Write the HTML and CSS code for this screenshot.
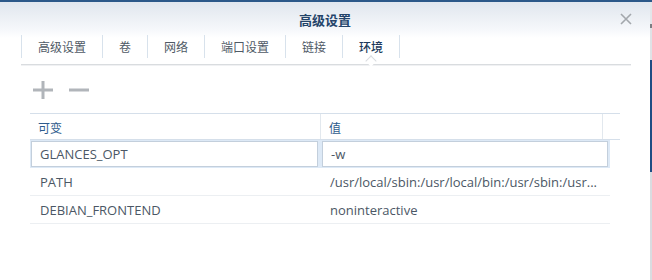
FILE: index.html
```html
<!DOCTYPE html>
<html lang="zh-CN">
<head>
  <meta charset="UTF-8">
  <title>高级设置</title>
  <link rel="stylesheet" href="styles.css">
</head>
<body>
  <div class="top-line"></div>
  <div class="page">
    <div class="dialog">
      <!-- Title -->
      <div class="title-bar">
        <span class="title">高级设置</span>
        <svg class="close" width="12" height="12" viewBox="0 0 12 12">
          <path d="M1 1L11 11M11 1L1 11" stroke="#a3a7ac" stroke-width="1.6" fill="none"/>
        </svg>
      </div>

      <!-- Tabs -->
      <div class="tabs">
        <div class="tab">高级设置</div>
        <div class="tab">卷</div>
        <div class="tab">网络</div>
        <div class="tab">端口设置</div>
        <div class="tab">链接</div>
        <div class="tab active">环境</div>
      </div>

      <!-- Toolbar -->
      <div class="toolbar">
        <svg width="20" height="20" viewBox="0 0 20 20">
          <path d="M0 10H20M10 1V19" stroke="#b1b5ba" stroke-width="3" fill="none"/>
        </svg>
        <svg width="20" height="20" viewBox="0 0 20 20">
          <path d="M0 10H20" stroke="#b1b5ba" stroke-width="3" fill="none"/>
        </svg>
      </div>

      <!-- Environment table -->
      <div class="grid">
        <div class="grid-head">
          <div class="hcell">可变</div>
          <div class="hcell">值</div>
          <div class="hcell gutter"></div>
        </div>
        <div class="grid-body">
          <div class="row editing">
            <div class="field">GLANCES_OPT</div>
            <div class="field">-w</div>
          </div>
          <div class="row">
            <div class="cell">PATH</div>
            <div class="cell">/usr/local/sbin:/usr/local/bin:/usr/sbin:/usr...</div>
          </div>
          <div class="row">
            <div class="cell">DEBIAN_FRONTEND</div>
            <div class="cell">noninteractive</div>
          </div>
        </div>
      </div>
    </div>
    <div class="edge"></div>
  </div>
</body>
</html>
```

FILE: styles.css
```css
body {
  margin: 0;
  padding: 0;
  width: 652px;
  height: 280px;
  overflow: hidden;
  background-color: #fff;
  font-family: "Open Sans", "Noto Sans CJK SC", sans-serif;
  color: #4b5765;
}

.top-line {
  height: 2px;
  background-color: #2c5889;
}

.page {
  display: flex;
  height: 278px;
}

.dialog {
  width: 650px;
  background: linear-gradient(#e0e6ee 0, #f6f8fb 28px, #fff 36px);
}

.edge {
  width: 2px;
  background: linear-gradient(#e3e6ea 0, #e3e6ea 22px, #7c7f84 22px, #7c7f84 26px, #dfe2e6 26px, #dfe2e6 58px, #1f4d84 58px, #1f4d84 170px, #d9dce0 170px);
}

/* title */
.title-bar {
  height: 33px;
  display: flex;
  align-items: center;
  justify-content: center;
  position: relative;
}

.title {
  font-family: "Noto Sans CJK SC", sans-serif;
  font-size: 13px;
  font-weight: bold;
  color: #24446a;
  margin-top: 1px;
}

.close {
  position: absolute;
  left: 620px;
  top: 11px;
}

/* tabs */
.tabs {
  margin: 0 19px 0 21px;
  height: 29px;
  display: flex;
  align-items: flex-start;
  border-bottom: 1px solid #d9dcdf;
  box-shadow: 0 1px 0 #f0f1f3;
}

.tab {
  height: 23px;
  line-height: 23px;
  padding: 0 16px;
  border-left: 1px solid #d8e2ec;
  font-family: "Noto Sans CJK SC", sans-serif;
  font-size: 12px;
  color: #4f5a66;
  position: relative;
}

.tab:last-child {
  border-right: 1px solid #d8e2ec;
}

.tab.active {
  color: #1f3b5c;
  font-weight: 500;
}

.tab.active::after {
  content: "";
  position: absolute;
  left: 50%;
  bottom: -7px;
  width: 7px;
  height: 7px;
  margin-left: -4px;
  background: #fff;
  border-left: 1px solid #d9dcdf;
  border-top: 1px solid #d9dcdf;
  transform: rotate(45deg);
}

/* toolbar */
.toolbar {
  height: 48px;
  display: flex;
  align-items: center;
  gap: 16px;
  padding-left: 33px;
  padding-top: 2px;
  box-sizing: border-box;
}

/* table */
.grid {
  margin-left: 30px;
  width: 590px;
}

.grid-head {
  display: grid;
  grid-template-columns: 291px 282px 17px;
  height: 27px;
  border-top: 1px solid #d5dfea;
  border-bottom: 1px solid #d5dfea;
  box-sizing: border-box;
}

.hcell {
  display: flex;
  align-items: center;
  padding-left: 8px;
  padding-top: 1px;
  border-right: 1px solid #e2e8ee;
  font-family: "Noto Sans CJK SC", sans-serif;
  font-size: 12px;
  color: #2e5b8d;
}

.hcell.gutter {
  border-right: none;
}

.grid-body {
  width: 580px;
}

.row {
  display: grid;
  grid-template-columns: 290px 290px;
  height: 28px;
  border-bottom: 1px solid #eceff2;
  box-sizing: border-box;
}

.row.editing {
  background-color: #dde9f6;
  border-bottom: none;
  padding: 1px 2px 1px 1px;
  column-gap: 4px;
  grid-template-columns: 287px 286px;
}

.field {
  background-color: #fff;
  border: 1px solid #c3cfdc;
  padding-left: 8px;
  padding-top: 1px;
  font-size: 13px;
  line-height: 23px;
  color: #4b5765;
}

.cell {
  padding: 2px 7px 0 10px;
  font-size: 13px;
  line-height: 25px;
  white-space: nowrap;
  overflow: hidden;
}
```
